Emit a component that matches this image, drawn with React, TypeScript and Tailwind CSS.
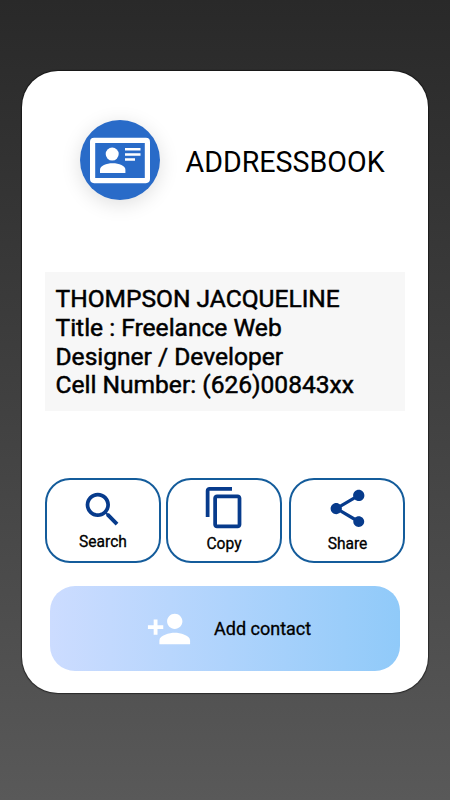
import type { ReactNode } from 'react'
import { MdContentCopy, MdPersonAdd, MdSearch, MdShare } from 'react-icons/md'

interface ActionButtonProps {
  label: string
  icon: ReactNode
  className: string
  labelClassName: string
}

function ActionButton({ label, icon, className, labelClassName }: ActionButtonProps) {
  return (
    <button
      className={`flex h-[85px] w-[116px] shrink-0 flex-col items-center rounded-[25px] border-2 border-[#145c9b] text-[#073b8c] ${className}`}
    >
      {icon}
      <span className={`leading-5 font-normal text-black [-webkit-text-stroke:0.3px_black] ${labelClassName}`}>
        {label}
      </span>
    </button>
  )
}

function Logo() {
  return (
    <div className="h-20 w-20 rounded-full bg-[#296bc8] shadow-[0_4px_20px_rgba(0,0,0,0.13)]">
      <svg viewBox="0 0 80 80" className="h-20 w-20" fill="white">
        <rect x="12.6" y="20.4" width="54.8" height="40.2" rx="1.5" fill="none" stroke="white" strokeWidth="5.2" />
        <circle cx="32.2" cy="34.1" r="6.5" />
        <path d="M20 53v-3.2c0-4.2 6.3-6.6 12.7-6.6s12.7 2.4 12.7 6.6V53z" />
        <path d="M45 28h15.5v2.6H45zM45 33.2h15.5v2.6H45zM45 38.2h10v2.6H45z" />
      </svg>
    </div>
  )
}

export default function App() {
  return (
    <main className="flex h-[800px] w-[450px] flex-col items-center bg-linear-to-b from-[#292929] to-[#595959] pt-[71px] font-[Roboto,sans-serif] text-black">
      <section className="flex h-[622px] w-[406px] flex-col rounded-[36px] bg-white px-[23px] pt-[49px] shadow-[0_0_1px_1px_rgba(0,0,0,0.5)]">
        <header className="flex h-20 items-center pl-[35px]">
          <Logo />
          <h1 className="ml-[25.5px] pt-[3px] text-[28.6px] leading-9 font-normal">ADDRESSBOOK</h1>
        </header>

        <div className="mt-[72px] h-[139px] bg-[#f7f7f7] pt-[13px] pl-[10.5px] text-[24.55px] leading-[28.8px] [-webkit-text-stroke:0.5px_black]">
          <p>THOMPSON JACQUELINE</p>
          <p>Title : Freelance Web</p>
          <p>Designer / Developer</p>
          <p>Cell Number: (626)00843xx</p>
        </div>

        <div className="mt-[67px] flex">
          <ActionButton
            label="Search"
            icon={<MdSearch className="mr-[2px] h-[45px] w-[45px]" />}
            className="pt-[6.5px]"
            labelClassName="mt-[0.5px] text-[15.6px]"
          />
          <ActionButton
            label="Copy"
            icon={<MdContentCopy className="h-[45px] w-[45px]" />}
            className="ml-[5px] pt-[5px]"
            labelClassName="mt-1 text-[15.6px]"
          />
          <ActionButton
            label="Share"
            icon={<MdShare className="h-[45px] w-[45px]" />}
            className="ml-[7px] pt-[6px]"
            labelClassName="mt-[3px] pl-px text-[15.6px]"
          />
        </div>

        <button className="mx-[5px] mt-[23px] flex h-[85px] items-center rounded-[25px] bg-linear-to-r from-[#ccdcff] to-[#90caf9] pl-24">
          <MdPersonAdd className="h-[46px] w-[46px] text-white" />
          <span className="ml-[22px] text-lg font-normal [-webkit-text-stroke:0.3px_black]">Add contact</span>
        </button>
      </section>
    </main>
  )
}
